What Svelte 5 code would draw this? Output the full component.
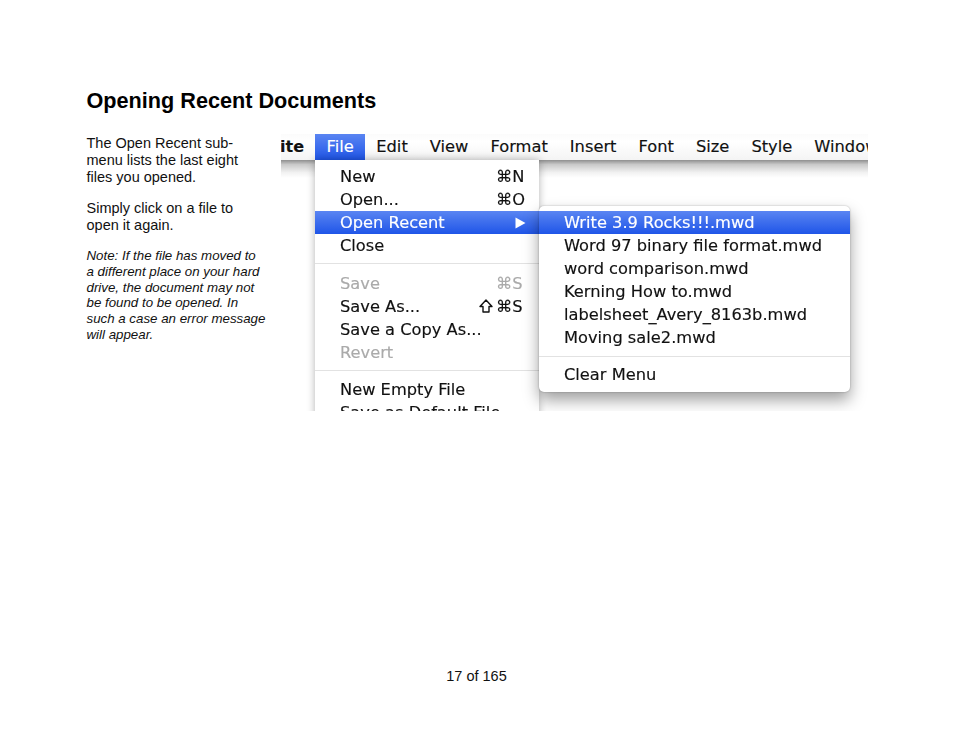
<script>
	const topItems = ['Edit', 'View', 'Format', 'Insert', 'Font', 'Size', 'Style', 'Window'];
	const fileMenu = [
		[
			{ label: 'New', key: '⌘N' },
			{ label: 'Open...', key: '⌘O' },
			{ label: 'Open Recent', active: true, arrow: true },
			{ label: 'Close' }
		],
		[
			{ label: 'Save', key: '⌘S', off: true },
			{ label: 'Save As...', key: '⌘S', shift: true },
			{ label: 'Save a Copy As...' },
			{ label: 'Revert', off: true }
		],
		[{ label: 'New Empty File' }, { label: 'Save as Default File' }]
	];
	const recent = [
		'Word 97 binary file format.mwd',
		'word comparison.mwd',
		'Kerning How to.mwd',
		'labelsheet_Avery_8163b.mwd',
		'Moving sale2.mwd'
	];
</script>

<div class="page">
	<h1>Opening Recent Documents</h1>
	<div class="content">
		<div class="side">
			<p>The Open Recent sub-<br />menu lists the last eight<br />files you opened.</p>
			<p>Simply click on a file to<br />open it again.</p>
			<p class="note">
				Note: If the file has moved to<br />a different place on your hard<br />drive, the document may not<br />be found to be opened. In<br />such a case an error message<br />will appear.
			</p>
		</div>
		<div class="shot">
			<div class="bar">
				<div class="app"><span>Write</span></div>
				<div class="top on">File</div>
				{#each topItems as item}
					<div class="top">{item}</div>
				{/each}
			</div>
			<div class="bar-shadow"></div>

			<div class="menu file">
				{#each fileMenu as group, i}
					{#if i > 0}<div class="sep"></div>{/if}
					{#each group as row}
						<div class="row" class:active={row.active} class:off={row.off}>
							<span>{row.label}</span>
							{#if row.key}
								<div class="keys">
									{#if row.shift}
										<svg class="shift" width="14" height="14" viewBox="0 0 14 14"><path d="M7 1 L13 7.5 H10 V13 H4 V7.5 H1 Z" fill="none" stroke="#111" stroke-width="1.4" stroke-linejoin="round" /></svg>
									{/if}
									<span class="key">{row.key}</span>
								</div>
							{/if}
							{#if row.arrow}
								<svg class="arrow" width="11" height="12" viewBox="0 0 11 12"><path d="M0.5 0.5 L10.5 6 L0.5 11.5 Z" fill="#fff" /></svg>
							{/if}
						</div>
					{/each}
				{/each}
			</div>

			<div class="menu sub">
				<div class="row active"><span>Write 3.9 Rocks!!!.mwd</span></div>
				{#each recent as name}
					<div class="row"><span>{name}</span></div>
				{/each}
				<div class="sep last"></div>
				<div class="row"><span>Clear Menu</span></div>
			</div>
		</div>
	</div>
	<div class="footer">17 of 165</div>
</div>

<style>
	:global(body) {
		margin: 0;
		background: #fff;
	}
	.page {
		width: 954px;
		height: 738px;
		box-sizing: border-box;
		padding: 88px 86px 0 86.5px;
		display: flex;
		flex-direction: column;
		font-family: 'Liberation Sans', Arial, sans-serif;
		color: #000;
	}
	h1 {
		margin: 0;
		font-size: 21.65px;
		line-height: 26px;
		font-weight: bold;
	}
	.content {
		display: flex;
		margin-top: 20px;
		height: 277px;
		gap: 15.5px;
	}
	.side {
		width: 179px;
		flex: none;
		padding-top: 1px;
		font-size: 14.5px;
		line-height: 17px;
		color: #111;
	}
	.side p {
		margin: 0 0 14px;
	}
	.side .note {
		font-size: 13.3px;
		line-height: 15.8px;
		font-style: italic;
	}
	.shot {
		position: relative;
		width: 587px;
		height: 277px;
		overflow: hidden;
		font-family: 'DejaVu Sans', sans-serif;
		font-size: 16.25px;
		color: #111;
		-webkit-text-stroke: 0.15px;
		filter: blur(0.4px);
	}
	.bar {
		display: flex;
		height: 26px;
		line-height: 26px;
		font-size: 16.3px;
		background: linear-gradient(#fbfbfb, #fff 30%, #f4f4f4);
		box-sizing: border-box;
		white-space: nowrap;
	}
	.app {
		width: 34px;
		flex: none;
		display: flex;
		justify-content: flex-end;
		padding-right: 11px;
		box-sizing: border-box;
		overflow: hidden;
		font-weight: bold;
		font-size: 16px;
	}
	.top {
		padding: 0 11px;
		flex: none;
	}
	.top.on {
		padding: 0 11.5px;
		color: #fff;
		background: linear-gradient(#5a85f2, #1f55e8);
	}
	.bar-shadow {
		height: 18px;
		background: linear-gradient(#8f8f8f, #c9c9c9 25%, #f2f2f2 70%, #fff);
	}
	.menu {
		position: absolute;
		background: #fff;
		box-sizing: border-box;
		white-space: nowrap;
	}
	.file {
		left: 34px;
		top: 26px;
		width: 224px;
		height: 260px;
		padding-top: 5px;
		box-shadow: 0 0 8px rgba(0, 0, 0, 0.3);
	}
	.sub {
		left: 258px;
		top: 72px;
		width: 311px;
		height: 186px;
		padding-top: 5px;
		border-radius: 5px;
		box-shadow: 0 8px 16px rgba(0, 0, 0, 0.38), 0 0 2px rgba(0, 0, 0, 0.3);
	}
	.row {
		display: flex;
		justify-content: space-between;
		align-items: center;
		height: 23px;
		padding: 0 15px 0 25px;
	}
	.row.active {
		color: #fff;
		background: linear-gradient(#5a85f2, #1f55e8);
	}
	.row.off {
		color: #aaa;
	}
	.keys {
		display: flex;
		align-items: center;
		gap: 3px;
	}
	.key {
		width: 28px;
	}
	.arrow {
		margin-right: -2px;
	}
	.sep {
		height: 1px;
		margin: 6px 0 7.5px;
		background: #e2e2e2;
	}
	.sep.last {
		margin: 7px 0 6px;
	}
	.footer {
		margin-top: 257px;
		text-align: center;
		font-size: 14.5px;
		line-height: 17px;
		width: 780px;
		color: #111;
	}
</style>
